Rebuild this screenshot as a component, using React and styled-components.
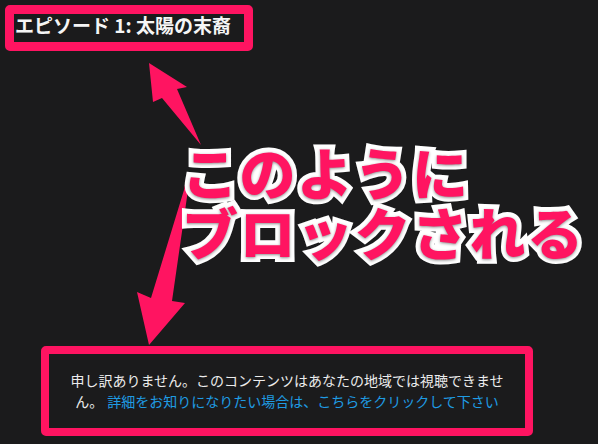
import styled, { createGlobalStyle } from "styled-components";

const GlobalStyle = createGlobalStyle`
  html, body {
    margin: 0;
    padding: 0;
    background: #1b1b1c;
  }
  body {
    font-family: "Noto Sans CJK JP", "Noto Sans", sans-serif;
  }
`;

const PINK = "#ff1461";

const Stage = styled.div`
  position: relative;
  width: 598px;
  height: 444px;
  box-sizing: border-box;
  padding: 5px 0 8px 0;
  display: flex;
  flex-direction: column;
  background: #1b1b1c;
  overflow: hidden;
`;

const TitleBox = styled.div`
  box-sizing: border-box;
  width: 248px;
  height: 46px;
  margin-left: 5px;
  border: 9px solid ${PINK};
  border-radius: 5px;
  padding: 0 0 0 1px;
  display: flex;
  align-items: flex-start;
`;

const Title = styled.h1`
  margin: 0;
  font-size: 19px;
  line-height: 22px;
  font-weight: 700;
  color: #f5f5f5;
  white-space: nowrap;
`;

const Callout = styled.div`
  position: relative;
  z-index: 2;
  margin: 90px 0 0 182px;
  font-size: 56px;
  line-height: 60px;
  letter-spacing: 1.5px;
  font-weight: 900;
  color: ${PINK};
  -webkit-text-stroke: 10px #ffffff;
  paint-order: stroke fill;
  text-shadow: 0 1px 3px rgba(0, 0, 0, 0.45);
  white-space: nowrap;
`;

const MessageBox = styled.div`
  box-sizing: border-box;
  width: 492px;
  height: 90px;
  margin: auto 0 0 41px;
  border: 8px solid ${PINK};
  border-radius: 5px;
  display: flex;
  align-items: center;
  justify-content: center;
`;

const Message = styled.p`
  margin: 0;
  max-width: 440px;
  text-align: center;
  font-size: 14px;
  line-height: 21px;
  color: #ececec;
`;

const Link = styled.a`
  color: #1f9be3;
  text-decoration: none;
  margin-left: 4px;
`;

const Arrows = styled.svg`
  position: absolute;
  left: 0;
  top: 0;
  z-index: 1;
  pointer-events: none;
`;

export default function App() {
  return (
    <>
      <GlobalStyle />
      <Stage>
        <TitleBox>
          <Title>エピソード 1: 太陽の末裔</Title>
        </TitleBox>

        <Callout>
          このように
          <br />
          ブロックされる
        </Callout>

        <MessageBox>
          <Message>
            申し訳ありません。このコンテンツはあなたの地域では視聴できません。
            <Link href="#">詳細をお知りになりたい場合は、こちらをクリックして下さい</Link>
          </Message>
        </MessageBox>

        <Arrows width="598" height="444" viewBox="0 0 598 444">
          <polygon
            fill={PINK}
            points="149,63 187,87 177,89 201,145 162,98 153,102"
          />
          <polygon
            fill={PINK}
            points="186.5,176 188,190 172,301 185,303 149,345 137,292 151,298 184,190"
          />
        </Arrows>
      </Stage>
    </>
  );
}
